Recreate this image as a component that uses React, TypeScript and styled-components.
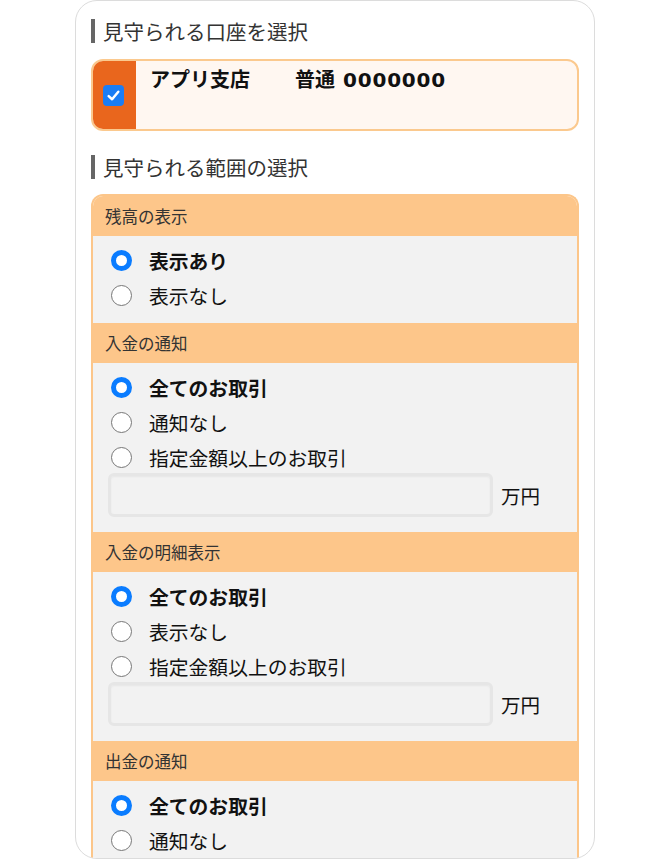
import styled, { createGlobalStyle } from "styled-components";

const GlobalStyle = createGlobalStyle`
  html, body {
    margin: 0;
    padding: 0;
    background: #ffffff;
  }
  body {
    font-family: "Noto Sans CJK JP", "Noto Sans", sans-serif;
    color: #222;
  }
`;

const Frame = styled.div`
  box-sizing: border-box;
  width: 520px;
  height: 859px;
  margin: 0 auto;
  border: 1.5px solid #dcdcdc;
  border-radius: 22px;
  overflow: hidden;
  padding: 18px 15px 0 15px;
`;

const Heading = styled.h2<{ gap?: number; after?: number }>`
  display: flex;
  align-items: center;
  margin: ${(props) => props.gap ?? 0}px 0 ${(props) => props.after ?? 16}px;
  font-size: 20.5px;
  line-height: 24px;
  font-weight: 400;
  color: #333;
  &::before {
    content: "";
    width: 4px;
    height: 24px;
    background: #666;
    margin-right: 8px;
  }
`;

const AccountCard = styled.div`
  display: flex;
  height: 72px;
  box-sizing: border-box;
  border: 2px solid #fbc98e;
  border-radius: 12px;
  overflow: hidden;
  background: #fff7f1;
`;

const CheckStrip = styled.div`
  width: 43px;
  background: #e9661d;
  display: flex;
  align-items: center;
  justify-content: center;
`;

const CheckBox = styled.div`
  width: 21px;
  height: 21px;
  border-radius: 4px;
  background: #1a7df4;
  display: flex;
  align-items: center;
  justify-content: center;
  margin-left: -2px;
`;

const AccountText = styled.div`
  display: flex;
  align-items: baseline;
  padding: 4px 0 0 14px;
  font-size: 20px;
  line-height: 28px;
  font-weight: 700;
  color: #111;
`;

const Branch = styled.span`
  width: 145px;
`;

const Digits = styled.span`
  margin-left: 8px;
  font-family: "DejaVu Sans", "Noto Sans", sans-serif;
  font-size: 20px;
  letter-spacing: 0.8px;
`;

const Panel = styled.div`
  border: 2px solid #fcc68a;
  border-bottom: none;
  border-radius: 12px 12px 0 0;
  overflow: hidden;
`;

const SectionHeader = styled.div`
  height: 40px;
  display: flex;
  align-items: center;
  padding-left: 12px;
  background: #fdc68a;
  font-size: 16.5px;
  color: #333;
`;

const SectionBody = styled.div`
  background: #f2f2f2;
  padding: 7px 16px 10px 18px;
`;

const OptionRow = styled.label`
  display: flex;
  align-items: center;
  height: 35px;
`;

const Radio = styled.span<{ checked: boolean }>`
  box-sizing: border-box;
  width: 21px;
  height: 21px;
  border-radius: 50%;
  border: ${(props) =>
    props.checked ? "5.5px solid #0a7cff" : "1.5px solid #777"};
  background: #fff;
  margin-right: 17px;
`;

const OptionLabel = styled.span<{ checked: boolean }>`
  font-size: 19.8px;
  font-weight: ${(props) => (props.checked ? 700 : 400)};
  color: #111;
`;

const AmountRow = styled.div`
  display: flex;
  align-items: center;
  margin: -2px 0 5px -3px;
`;

const AmountInput = styled.div`
  box-sizing: border-box;
  width: 385px;
  height: 44px;
  border: 3px solid #e6e6e6;
  border-radius: 6px;
  background: #f2f2f2;
  box-shadow: inset 0 1px 2px rgba(0, 0, 0, 0.05);
`;

const Unit = styled.span`
  margin-left: 8px;
  font-size: 19.5px;
  color: #111;
`;

type Section = {
  title: string;
  options: string[];
  amount?: boolean;
};

const sections: Section[] = [
  { title: "残高の表示", options: ["表示あり", "表示なし"] },
  {
    title: "入金の通知",
    options: ["全てのお取引", "通知なし", "指定金額以上のお取引"],
    amount: true,
  },
  {
    title: "入金の明細表示",
    options: ["全てのお取引", "表示なし", "指定金額以上のお取引"],
    amount: true,
  },
  {
    title: "出金の通知",
    options: ["全てのお取引", "通知なし", "指定金額以上のお取引"],
    amount: true,
  },
];

function App() {
  return (
    <>
      <GlobalStyle />
      <Frame>
        <Heading>見守られる口座を選択</Heading>
        <AccountCard>
          <CheckStrip>
            <CheckBox>
              <svg width="15" height="15" viewBox="0 0 14 14">
                <path
                  d="M2.5 7.5 L5.7 10.5 L11.5 3.5"
                  fill="none"
                  stroke="#fff"
                  strokeWidth="2.3"
                  strokeLinecap="round"
                  strokeLinejoin="round"
                />
              </svg>
            </CheckBox>
          </CheckStrip>
          <AccountText>
            <Branch>アプリ支店</Branch>
            <span>普通</span>
            <Digits>0000000</Digits>
          </AccountText>
        </AccountCard>
        <Heading gap={24} after={15}>
          見守られる範囲の選択
        </Heading>
        <Panel>
          {sections.map((section) => (
            <div key={section.title}>
              <SectionHeader>{section.title}</SectionHeader>
              <SectionBody>
                {section.options.map((option, i) => (
                  <OptionRow key={option}>
                    <Radio checked={i === 0} />
                    <OptionLabel checked={i === 0}>{option}</OptionLabel>
                  </OptionRow>
                ))}
                {section.amount && (
                  <AmountRow>
                    <AmountInput />
                    <Unit>万円</Unit>
                  </AmountRow>
                )}
              </SectionBody>
            </div>
          ))}
        </Panel>
      </Frame>
    </>
  );
}

export default App;
